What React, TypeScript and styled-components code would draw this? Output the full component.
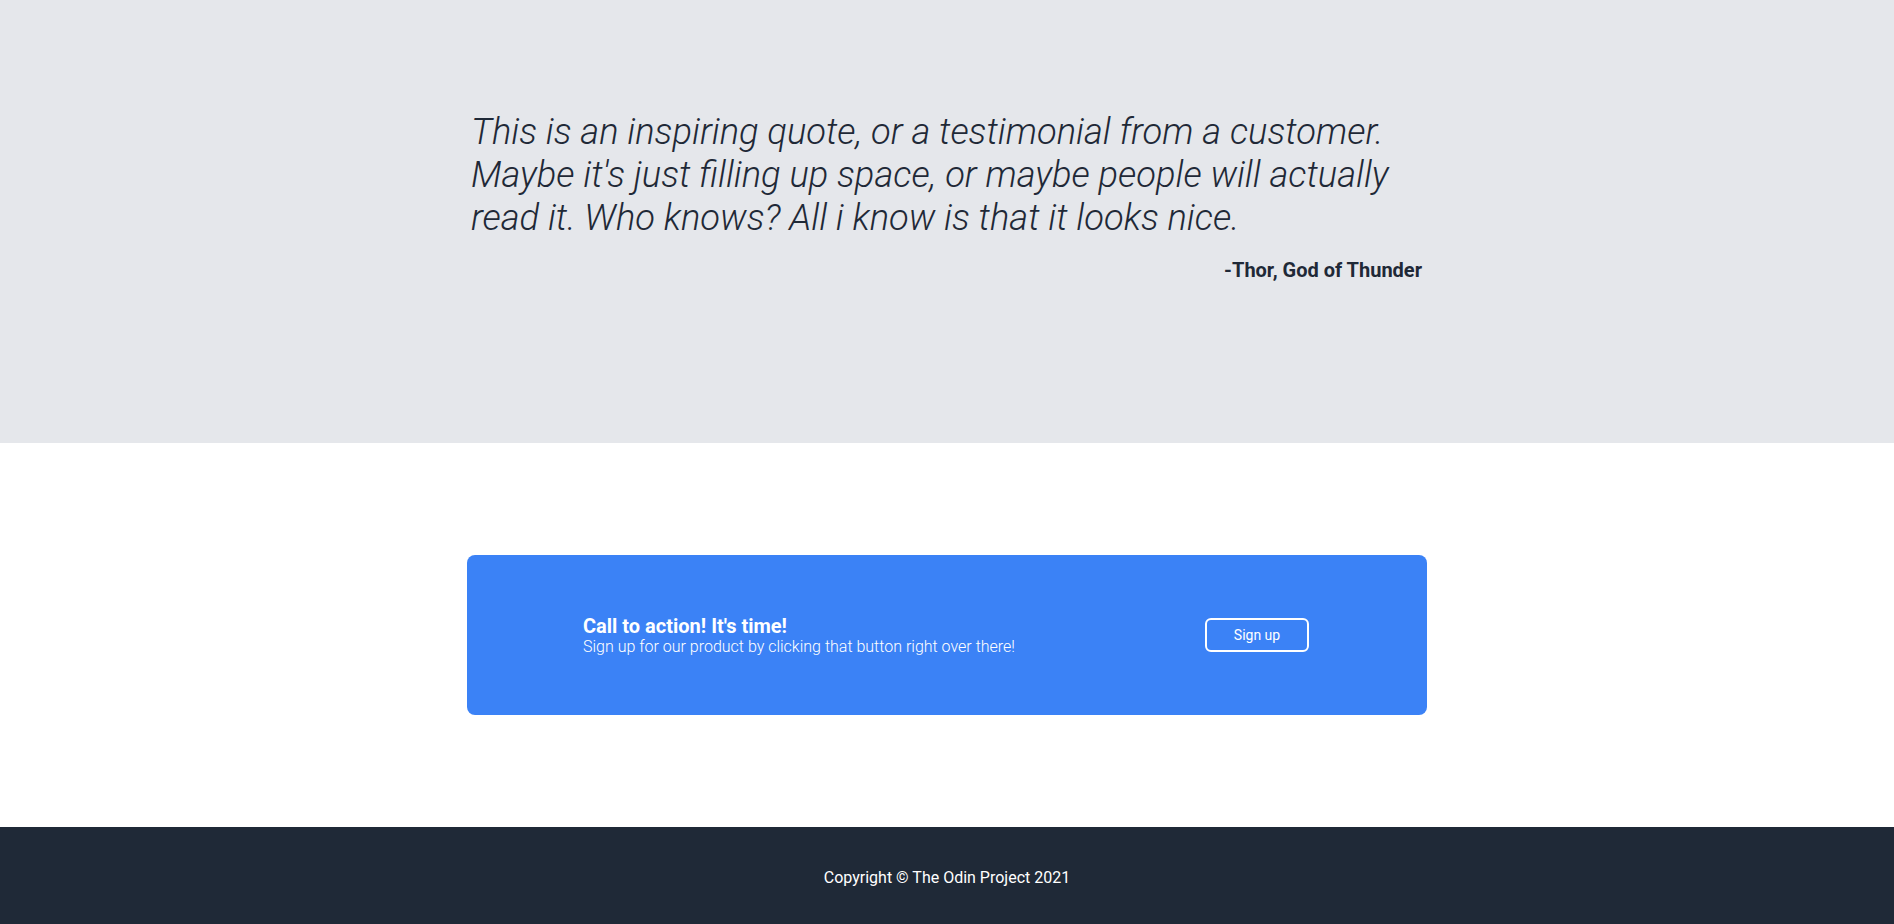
import React from "react";
import styled, { createGlobalStyle } from "styled-components";

const Global = createGlobalStyle`
  html, body { margin: 0; padding: 0; }
  body { font-family: Roboto, "Liberation Sans", sans-serif; color: #1f2937; background: #fff; }
  * { box-sizing: border-box; }
`;

const Page = styled.div`
  display: flex;
  flex-direction: column;
  min-height: 924px;
`;

const QuoteSection = styled.section`
  background: #e5e7eb;
  height: 443px;
  padding-top: 110px;
`;

const Container = styled.div`
  width: 960px;
  margin: 0 auto;
`;

const Quote = styled.blockquote`
  margin: 0;
  padding: 0 4px;
  font-size: 36.3px;
  line-height: normal;
  font-weight: 300;
  font-style: italic;
  color: #1f2937;
`;

const Author = styled.p`
  margin: 17px 0 0;
  padding-right: 5px;
  text-align: right;
  font-size: 20px;
  line-height: 28px;
  font-weight: 700;
  color: #1f2937;
`;

const CtaSection = styled.section`
  background: #fff;
  height: 384px;
  padding-top: 112px;
`;

const CtaBox = styled.div`
  width: 960px;
  height: 160px;
  margin: 0 auto;
  background: #3b82f6;
  border-radius: 8px;
  display: flex;
  align-items: center;
  justify-content: space-between;
  padding: 0 118px 0 116px;
  color: #fff;
`;

const CtaText = styled.div`
  display: flex;
  flex-direction: column;
  margin-top: 2px;
`;

const CtaTitle = styled.h2`
  margin: 0;
  font-size: 20px;
  line-height: 22px;
  font-weight: 700;
`;

const CtaSub = styled.p`
  margin: 0;
  font-size: 16px;
  line-height: 20px;
  font-weight: 300;
`;

const Button = styled.button`
  width: 104px;
  height: 34px;
  border: 2px solid #fff;
  border-radius: 6px;
  background: transparent;
  color: #fff;
  font-family: Roboto, "Liberation Sans", sans-serif;
  font-size: 14px;
  font-weight: 400;
  cursor: pointer;
`;

const Footer = styled.footer`
  background: #1f2937;
  flex: 1;
  height: 97px;
  padding-top: 3px;
  display: flex;
  align-items: center;
  justify-content: center;
  color: #fff;
  font-size: 16px;
`;

export default function App() {
  return (
    <Page>
      <Global />
      <QuoteSection>
        <Container>
          <Quote>
            This is an inspiring quote, or a testimonial from a customer. Maybe it's just filling up space, or maybe people will actually read it. Who knows? All i know is that it looks nice.
          </Quote>
          <Author>-Thor, God of Thunder</Author>
        </Container>
      </QuoteSection>
      <CtaSection>
        <CtaBox>
          <CtaText>
            <CtaTitle>Call to action! It's time!</CtaTitle>
            <CtaSub>Sign up for our product by clicking that button right over there!</CtaSub>
          </CtaText>
          <Button>Sign up</Button>
        </CtaBox>
      </CtaSection>
      <Footer>Copyright © The Odin Project 2021</Footer>
    </Page>
  );
}
